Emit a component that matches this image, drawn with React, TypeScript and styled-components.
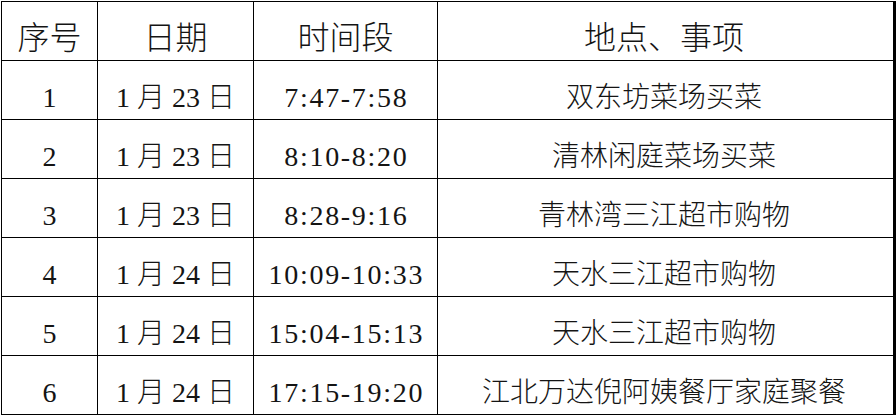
import React from "react";
import styled, { createGlobalStyle } from "styled-components";

// ---------------- Data ----------------
interface Visit {
  no: number;
  date: string;
  time: string;
  place: string;
}

const visits: Visit[] = [
  { no: 1, date: "1 月 23 日", time: "7:47-7:58", place: "双东坊菜场买菜" },
  { no: 2, date: "1 月 23 日", time: "8:10-8:20", place: "清林闲庭菜场买菜" },
  { no: 3, date: "1 月 23 日", time: "8:28-9:16", place: "青林湾三江超市购物" },
  { no: 4, date: "1 月 24 日", time: "10:09-10:33", place: "天水三江超市购物" },
  { no: 5, date: "1 月 24 日", time: "15:04-15:13", place: "天水三江超市购物" },
  { no: 6, date: "1 月 24 日", time: "17:15-19:20", place: "江北万达倪阿姨餐厅家庭聚餐" },
];

const headers = ["序号", "日期", "时间段", "地点、事项"];

// ---------------- Component ----------------
const App: React.FC = () => {
  return (
    <Page>
      <GlobalStyle />
      <Grid>
        {headers.map((h, i) => (
          <HeadCell key={h} last={i === headers.length - 1}>
            {h}
          </HeadCell>
        ))}
        {visits.map((v) => (
          <React.Fragment key={v.no}>
            <Cell>{v.no}</Cell>
            <Cell>{v.date}</Cell>
            <Cell spaced>{v.time}</Cell>
            <Cell last>{v.place}</Cell>
          </React.Fragment>
        ))}
      </Grid>
    </Page>
  );
};

// ---------------- Styled Components ----------------
const GlobalStyle = createGlobalStyle`
  html, body {
    margin: 0;
    padding: 0;
    background: #fff;
  }
`;

const Page = styled.div`
  width: 896px;
  height: 416px;
  padding: 1px 0 0 1px;
  box-sizing: border-box;
  background: #fff;
  overflow: hidden;
`;

const Grid = styled.div`
  display: grid;
  grid-template-columns: 96px 156px 184px 458px;
  grid-auto-rows: 59px;
  border-left: 1px solid #000;
  border-top: 1px solid #000;
  width: max-content;
  font-family: "Liberation Serif", "Noto Sans CJK SC", serif;
  color: #141414;
`;

const Cell = styled.div<{ last?: boolean; spaced?: boolean }>`
  display: flex;
  align-items: center;
  justify-content: center;
  padding-top: 16px;
  padding-left: ${(p) => (p.spaced ? "1.7px" : "0")};
  padding-right: ${(p) => (p.last ? "3px" : "0")};
  box-sizing: border-box;
  border-right: ${(p) => (p.last ? "3px" : "1px")} solid #000;
  border-bottom: 1px solid #000;
  font-size: 28px;
  font-weight: 300;
  letter-spacing: ${(p) => (p.spaced ? "1.7px" : "0")};
  white-space: pre;
  line-height: 1;
`;

const HeadCell = styled(Cell)`
  font-size: 32px;
  padding-top: 14px;
`;

export default App;
